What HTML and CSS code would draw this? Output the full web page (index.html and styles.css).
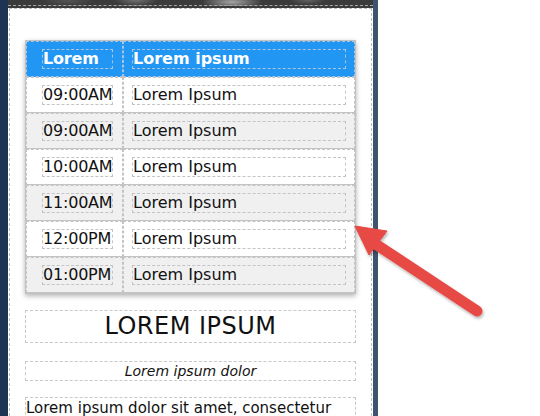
FILE: index.html
```html
<!doctype html>
<html lang="en">
<head>
  <meta charset="UTF-8">
  <title>Schedule</title>
  <link rel="stylesheet" href="styles.css">
</head>
<body>

<div id="page">
  <div class="rail-left"></div>

  <div class="panel">
    <div class="banner"><div class="photo"></div></div>

    <div class="content">
      <table class="schedule">
        <thead>
          <tr>
            <th class="time"><span>Lorem</span></th>
            <th class="what"><span>Lorem ipsum</span></th>
          </tr>
        </thead>
        <tbody>
          <tr><td class="time"><span>09:00AM</span></td><td class="what"><span>Lorem Ipsum</span></td></tr>
          <tr><td class="time"><span>09:00AM</span></td><td class="what"><span>Lorem Ipsum</span></td></tr>
          <tr><td class="time"><span>10:00AM</span></td><td class="what"><span>Lorem Ipsum</span></td></tr>
          <tr><td class="time"><span>11:00AM</span></td><td class="what"><span>Lorem Ipsum</span></td></tr>
          <tr><td class="time"><span>12:00PM</span></td><td class="what"><span>Lorem Ipsum</span></td></tr>
          <tr><td class="time"><span>01:00PM</span></td><td class="what"><span>Lorem Ipsum</span></td></tr>
        </tbody>
      </table>

      <h1 class="title">LOREM IPSUM</h1>
      <p class="sub">Lorem ipsum dolor</p>
      <p class="text">Lorem ipsum dolor sit amet, consectetur adipiscing elit, sed do eiusmod tempor.</p>
    </div>
  </div>

  <div class="rail-right"></div>
  <div class="blank"></div>

  <svg class="arrow" width="540" height="416" viewBox="0 0 540 416">
    <defs>
      <filter id="shade" x="-20%" y="-20%" width="140%" height="140%">
        <feDropShadow dx="1" dy="2" stdDeviation="1.5" flood-color="#000" flood-opacity="0.3"/>
      </filter>
    </defs>
    <g filter="url(#shade)" fill="#e74a45" stroke="#e74a45">
      <line x1="374" y1="243" x2="477" y2="311" stroke-width="11" stroke-linecap="round"/>
      <polygon points="355,226 387,231 369,255" stroke-width="1" stroke-linejoin="round"/>
    </g>
  </svg>
</div>

</body>
</html>
```

FILE: styles.css
```css
body {
  margin: 0;
  background: #fff;
  font-family: 'DejaVu Sans', Verdana, sans-serif;
  color: #111;
  overflow: hidden;
}

#page {
  position: relative;
  display: flex;
  width: 540px;
  height: 416px;
}

.rail-left {
  width: 8px;
  background: #1d3452;
}

.rail-right {
  width: 5px;
  background: #3e546e;
}

.blank {
  flex: 1;
  background: #fff;
}

.panel {
  width: 365px;
  background: #fff;
}

.banner {
  height: 6px;
  padding-bottom: 2px;
  background: #3b3b3b;
}

.banner .photo {
  height: 5px;
  border-bottom: 1px dashed #a8a8a8;
  background:
    radial-gradient(ellipse 22px 6px at 128px 0, rgba(170,170,170,0.5), transparent),
    radial-gradient(ellipse 30px 7px at 224px 2px, rgba(210,210,210,0.7), transparent),
    radial-gradient(ellipse 18px 5px at 300px 0, rgba(140,140,140,0.5), transparent),
    radial-gradient(ellipse 26px 5px at 60px 1px, rgba(110,110,110,0.5), transparent),
    #3a3a3a;
}

.content {
  margin: 0 1px;
  height: 420px;
  padding: 31px 15px 0;
  border: 1px dashed #bdbdbd;
}

.schedule {
  width: 100%;
  border-collapse: separate;
  border-spacing: 0;
  border: 1px solid #c2c2c2;
  box-shadow: 0 2px 5px rgba(0,0,0,0.3);
  font-size: 16px;
  line-height: 20px;
}

.schedule th,
.schedule td {
  height: 20px;
  padding: 7px 8px;
  border: 1px dashed #c4c4c4;
  text-align: left;
}

.schedule th {
  background: #2196f3;
  color: #fff;
  font-weight: bold;
  border-color: #a9c4dc;
}

.schedule tbody tr:nth-child(even) td {
  background: #f0f0f0;
}

.schedule tbody td {
  border-bottom: 1px solid #c4c4c4;
}

.schedule .time {
  width: 71px;
  padding: 7px 9px 7px 15px;
}

.schedule span {
  display: block;
  border: 1px dashed #c4c4c4;
  line-height: 18px;
  white-space: nowrap;
}

.schedule .time span {
  width: 71px;
  box-sizing: border-box;
  letter-spacing: -0.2px;
}

.schedule th span {
  border-color: #a9c4dc;
}

.title {
  margin: 16px 0 0;
  border: 1px dashed #c8c8c8;
  font-size: 24px;
  font-weight: normal;
  line-height: 31px;
  letter-spacing: 0.5px;
  text-align: center;
}

.sub {
  margin: 18px 0 0;
  border: 1px dashed #c8c8c8;
  font-size: 14px;
  font-style: italic;
  line-height: 18px;
  text-align: center;
}

.text {
  margin: 16px 0 0;
  border: 1px dashed #c8c8c8;
  font-size: 15px;
  line-height: 20px;
}

.arrow {
  position: absolute;
  left: 0;
  top: 0;
  pointer-events: none;
}
```
